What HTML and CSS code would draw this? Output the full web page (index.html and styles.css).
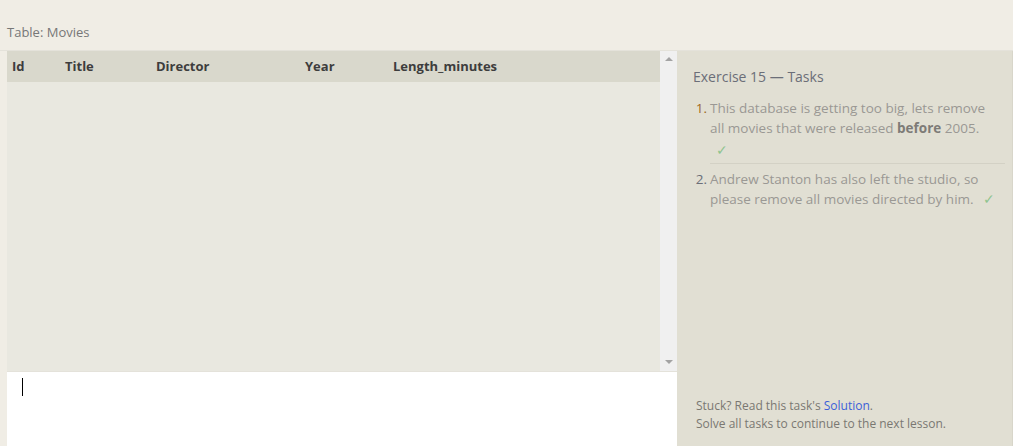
FILE: index.html
```html
<!DOCTYPE html>
<html>
<head>
<meta charset="utf-8">
<link rel="stylesheet" href="styles.css">
</head>
<body>
<div class="page">
  <div class="caption">Table: Movies</div>
  <div class="main">
    <div class="left">
      <div class="results">
        <div class="table-area">
          <div class="thead">
            <span class="c-id">Id</span>
            <span class="c-title">Title</span>
            <span class="c-dir">Director</span>
            <span class="c-year">Year</span>
            <span class="c-len">Length_minutes</span>
          </div>
        </div>
        <div class="scrollbar">
          <span class="arrow up"></span>
          <span class="arrow down"></span>
        </div>
      </div>
      <div class="editor"><span class="cursor"></span></div>
    </div>
    <div class="tasks">
      <div class="tasks-top">
        <h2 class="tasks-title">Exercise 15 — Tasks</h2>
        <ol class="task-list">
          <li class="task"><span class="num">1.</span><span class="txt">This database is getting too big, lets remove<br>all movies that were released <b>before</b> 2005.<br><span class="check first">✓</span></span></li>
          <li class="task"><span class="num">2.</span><span class="txt">Andrew Stanton has also left the studio, so<br>please remove all movies directed by him. <span class="check">✓</span></span></li>
        </ol>
      </div>
      <div class="tasks-foot">
        <div>Stuck? Read this task's <a class="link">Solution</a>.</div>
        <div>Solve all tasks to continue to the next lesson.</div>
      </div>
    </div>
  </div>
</div>
</body>
</html>
```

FILE: styles.css
```css
html, body {
  margin: 0;
  padding: 0;
  background: #f0ede5;
  font-family: "Open Sans", "Noto Sans", sans-serif;
}
.page {
  width: 1013px;
  height: 446px;
  overflow: hidden;
  display: flex;
  flex-direction: column;
}
.caption {
  height: 50px;
  box-sizing: border-box;
  padding: 22px 0 0 7px;
  font-size: 13px;
  color: #777;
  line-height: 20px;
}
.main {
  flex: 1;
  display: flex;
  border-top: 1px solid #e4e2da;
}
.left {
  margin-left: 7px;
  width: 670px;
  display: flex;
  flex-direction: column;
}
.results {
  height: 320px;
  display: flex;
}
.table-area {
  flex: 1;
  background: #e9e8e0;
}
.thead {
  height: 31px;
  background: #d9d8cc;
  position: relative;
  font-size: 13px;
  font-weight: 700;
  color: #3d3d3d;
  line-height: 31px;
}
.thead span { position: absolute; top: 0; }
.c-id { left: 5px; }
.c-title { left: 58px; }
.c-dir { left: 149px; }
.c-year { left: 298px; }
.c-len { left: 386px; }
.scrollbar {
  width: 17px;
  background: #f0f0f0;
  display: flex;
  flex-direction: column;
  justify-content: space-between;
  align-items: center;
  padding: 6px 0 7px;
  box-sizing: border-box;
}
.arrow {
  width: 0;
  height: 0;
  border-left: 4px solid transparent;
  border-right: 4px solid transparent;
}
.arrow.up { border-bottom: 4px solid #a3a3a3; }
.arrow.down { border-top: 4px solid #a3a3a3; }
.editor {
  flex: 1;
  background: #fff;
  border-top: 1px solid #e4e2da;
  padding: 6px 0 0 15px;
}
.cursor {
  display: block;
  width: 1px;
  height: 18px;
  background: #000;
}
.tasks {
  flex: 1;
  background: #e1dfd3;
  display: flex;
  flex-direction: column;
  justify-content: space-between;
  padding: 15px 8px 13px 16px;
  box-shadow: inset -1px 0 0 #d8d6ca;
}
.tasks-title {
  margin: 0;
  font-size: 14px;
  font-weight: 400;
  color: #6b6e78;
  line-height: 22px;
}
.task-list {
  list-style: none;
  margin: 10px 0 0 0;
  padding: 0;
}
.task {
  display: flex;
  font-size: 13.5px;
  line-height: 20px;
  color: #9a9894;
}
.task + .task {
  margin-top: 5px;
}
.task:first-child .txt {
  border-bottom: 1px solid #d3d1c5;
  padding-bottom: 3px;
}
.num {
  width: 17px;
  flex: none;
  text-align: right;
  padding-right: 3px;
  color: #6b6e78;
  box-sizing: border-box;
}
.task:first-child .num { color: #a06a1e; }
.txt {
  flex: 1;
}
.txt b { color: #7d7b77; }
.check { color: #8fc48f; margin-left: 6px; font-size: 14px; line-height: 20px; }
.check.first { display: inline-block; margin-top: 2px; }
.tasks-foot {
  font-size: 12px;
  line-height: 18px;
  color: #7a7872;
  padding-left: 3px;
}
.link { color: #3c5fd8; text-decoration: none; }
```
